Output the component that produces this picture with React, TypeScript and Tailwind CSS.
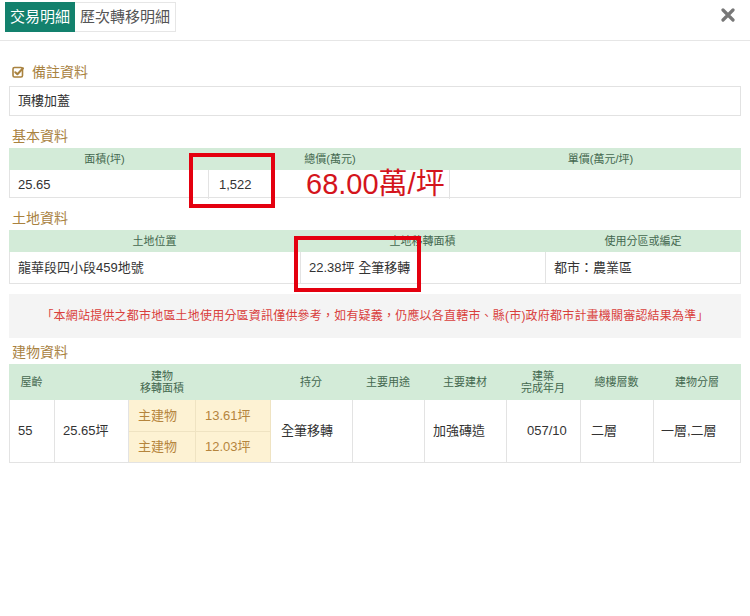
// Transaction detail modal: tabs, remarks, basic / land / building tables.

const label = "h-[24px] flex items-center text-[14px] text-[#a9823f] pl-[3px]";
const head = "bg-[#d3ebd8] text-[11px] text-[#44684f] leading-[12px]";
const cell = "flex items-center px-[8px] border-r border-[#e3e3e3]";

function CheckSquare() {
  return (
    <svg width="12" height="12" viewBox="0 0 12 12" className="mr-[8px]">
      <rect x="1" y="1.5" width="9.5" height="9.5" rx="1.5" fill="none" stroke="#a9823f" strokeWidth="1.6" />
      <path d="M3.3 6.2 L5.4 8.2 L11 2.2" fill="none" stroke="#a9823f" strokeWidth="2" strokeLinecap="round" strokeLinejoin="round" />
    </svg>
  );
}

function CloseIcon() {
  return (
    <svg width="14" height="14" viewBox="0 0 14 14">
      <path d="M2 2 L12 12 M12 2 L2 12" stroke="#777" strokeWidth="3.2" strokeLinecap="round" />
    </svg>
  );
}

export default function App() {
  return (
    <div className="relative w-[750px] h-[616px] bg-white font-['Liberation_Sans','Noto_Sans_CJK_TC',sans-serif] text-[#333]">
      {/* header */}
      <div className="h-[41px] border-b border-[#e6e6e6] flex justify-between">
        <div className="flex ml-[5px] mt-[2px] h-[30px]">
          <div className="px-[5px] flex items-center bg-[#13816d] text-white text-[15px]">交易明細</div>
          <div className="px-[5px] flex items-center border border-[#e6e6e6] border-l-0 text-[#555] text-[15px]">歷次轉移明細</div>
        </div>
        <div className="mt-[8px] mr-[15px]">
          <CloseIcon />
        </div>
      </div>

      <div className="px-[9px]">
        {/* remarks */}
        <div className={label + " mt-[19px]"}>
          <CheckSquare />
          備註資料
        </div>
        <div className="mt-[2px] h-[30px] border border-[#e2e2e2] flex items-center px-[8px] text-[13px]">頂樓加蓋</div>

        {/* basic */}
        <div className={label + " mt-[8px]"}>基本資料</div>
        <div className={head + " grid grid-cols-[191px_260px_1fr] h-[22px] items-center text-center"}>
          <div>面積(坪)</div>
          <div>總價(萬元)</div>
          <div>單價(萬元/坪)</div>
        </div>
        <div className="grid grid-cols-[199px_82px_159px_1fr] h-[28px] border-x border-b border-[#e3e3e3] text-[13px]">
          <div className={cell}>25.65</div>
          <div className="flex items-center px-[10px]">1,522</div>
          <div className={cell + " pl-[15px] text-[29px] leading-none text-[#d4141c] whitespace-nowrap"}>68.00萬/坪</div>
          <div />
        </div>

        {/* land */}
        <div className={label + " mt-[8px]"}>土地資料</div>
        <div className={head + " grid grid-cols-[291px_245px_1fr] h-[22px] items-center text-center"}>
          <div>土地位置</div>
          <div>土地移轉面積</div>
          <div>使用分區或編定</div>
        </div>
        <div className="grid grid-cols-[291px_245px_1fr] h-[32px] border-x border-b border-[#e3e3e3] text-[13px]">
          <div className={cell}>龍華段四小段459地號</div>
          <div className={cell}>22.38坪 全筆移轉</div>
          <div className="flex items-center px-[8px]">都市：農業區</div>
        </div>

        {/* notice */}
        <div className="mt-[10px] h-[44px] bg-[#f4f4f4] flex items-center justify-center text-[12px] tracking-[0.2px] text-[#d9403c]">
          「本網站提供之都市地區土地使用分區資訊僅供參考，如有疑義，仍應以各直轄市、縣(市)政府都市計畫機關審認結果為準」
        </div>

        {/* building */}
        <div className={label + " mt-[2px]"}>建物資料</div>
        <div className={head + " grid grid-cols-[45px_74px_67px_75px_82px_72px_82px_74px_73px_1fr] h-[36px] items-center text-center"}>
          <div>屋齡</div>
          <div className="col-span-3">
            建物
            <br />
            移轉面積
          </div>
          <div>持分</div>
          <div>主要用途</div>
          <div>主要建材</div>
          <div>
            建築
            <br />
            完成年月
          </div>
          <div>總樓層數</div>
          <div>建物分層</div>
        </div>
        <div className="grid grid-cols-[45px_74px_67px_75px_82px_72px_82px_74px_73px_1fr] grid-rows-[32px_30px] border-x border-b border-[#e3e3e3] text-[13px]">
          <div className={cell + " row-span-2"}>55</div>
          <div className={cell + " row-span-2"}>25.65坪</div>
          <div className="flex items-center px-[9px] bg-[#fdf2d3] text-[#b5853d] border-r border-b border-[#efe3c2]">主建物</div>
          <div className="flex items-center px-[9px] bg-[#fdf2d3] text-[#b5853d] border-r border-b border-[#efe3c2]">13.61坪</div>
          <div className={cell + " row-span-2 px-[10px]"}>全筆移轉</div>
          <div className={cell + " row-span-2"} />
          <div className={cell + " row-span-2 px-[6px]"}>加強磚造</div>
          <div className={cell + " row-span-2 pl-[20px]"}>057/10</div>
          <div className={cell + " row-span-2 px-[10px]"}>二層</div>
          <div className="row-span-2 flex items-center px-[7px]">一層,二層</div>
          <div className="flex items-center px-[9px] bg-[#fdf2d3] text-[#b5853d] border-r border-[#efe3c2]">主建物</div>
          <div className="flex items-center px-[9px] bg-[#fdf2d3] text-[#b5853d] border-r border-[#efe3c2]">12.03坪</div>
        </div>
      </div>

      {/* red annotation boxes */}
      <div className="absolute left-[189px] top-[153px] w-[86px] h-[55px] border-[4px] border-[#e4000f]" />
      <div className="absolute left-[294px] top-[236px] w-[127px] h-[56px] border-[4px] border-[#e4000f]" />
    </div>
  );
}
